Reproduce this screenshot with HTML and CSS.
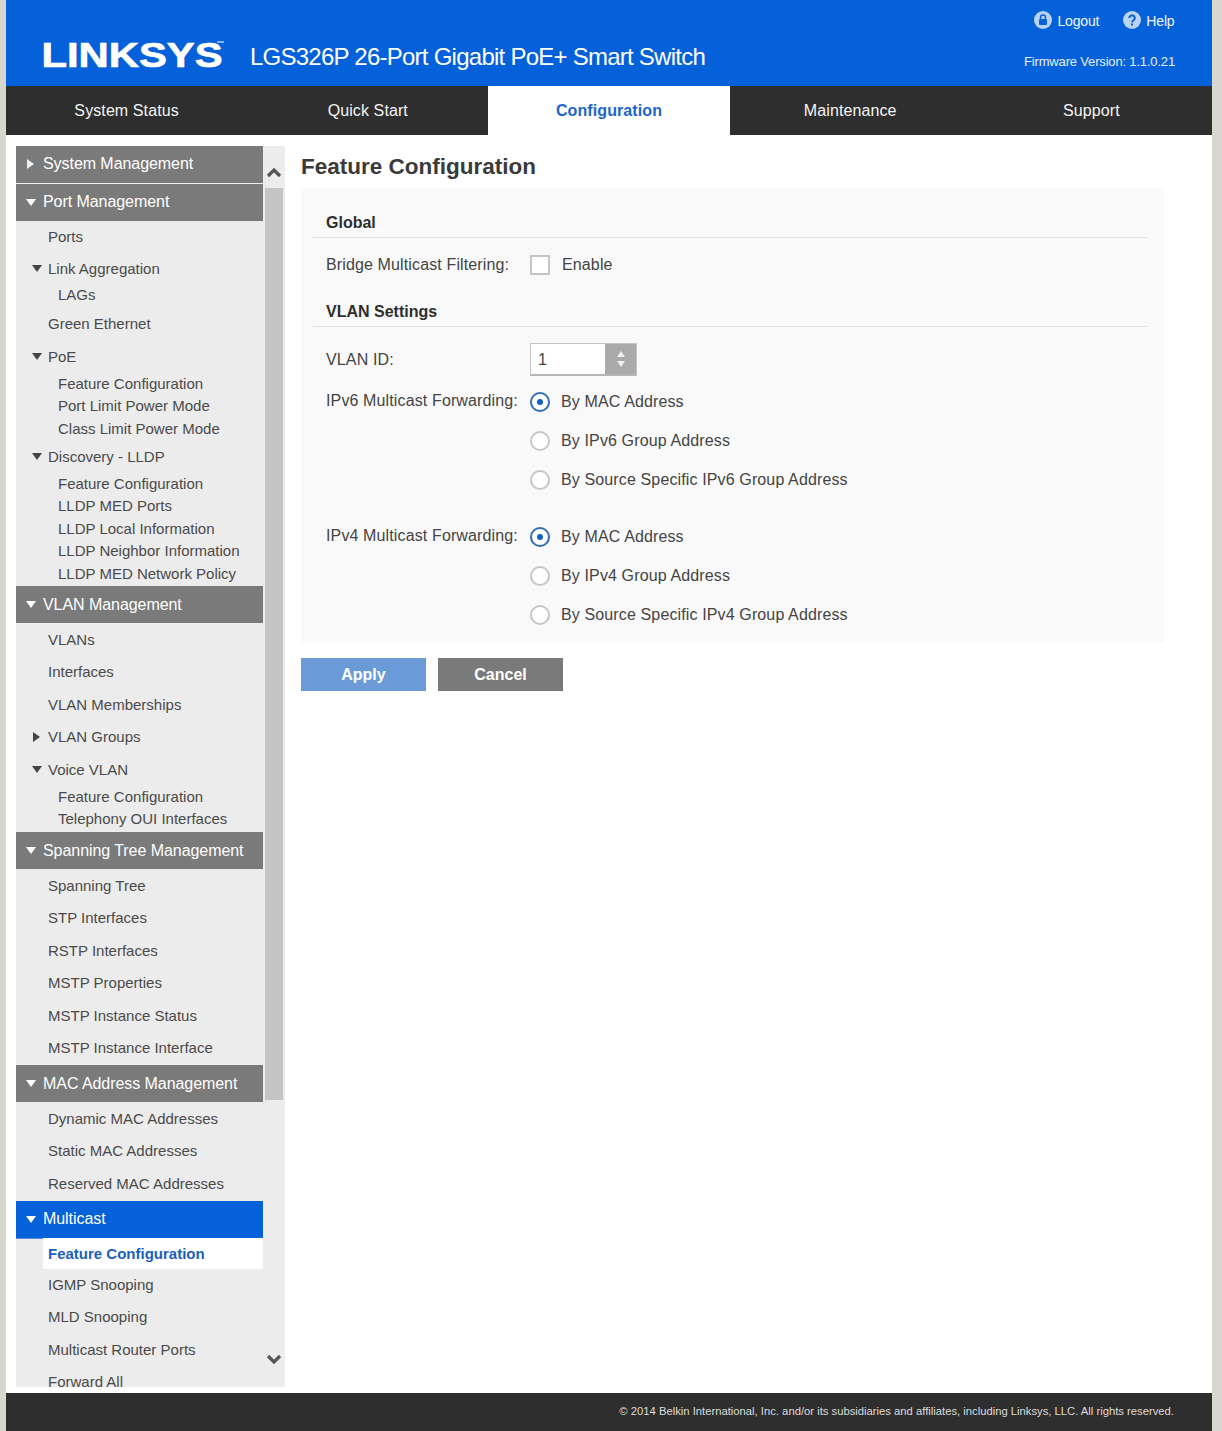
FILE: index.html
```html
<!DOCTYPE html>
<html lang="en">
<head>
<meta charset="utf-8">
<title>LGS326P Feature Configuration</title>
<link rel="stylesheet" href="styles.css">
</head>
<body>
<div class="page">
  <header class="top">
    <div class="brand">
      <svg class="logo" width="190" height="32" viewBox="0 0 190 32"><text x="0.500" y="27.500" textLength="181" lengthAdjust="spacingAndGlyphs" class="logo-text">LINKSYS</text><rect x="176" y="2.500" width="7" height="1" fill="#fff"/></svg>
      <span class="product">LGS326P 26-Port Gigabit PoE+ Smart Switch</span>
    </div>
    <div class="top-right">
      <div class="links">
        <a class="link"><svg width="18" height="18" viewBox="0 0 18 18"><circle cx="9" cy="9" r="9" fill="#b9d3f2"/><rect x="5" y="8" width="8" height="6" rx="1" fill="#0561d9"/><path d="M6.500 8V6.500a2.500 2.500 0 0 1 5 0V8" fill="none" stroke="#0561d9" stroke-width="1.500"/></svg><span class="link-t">Logout</span></a>
        <a class="link"><svg width="18" height="18" viewBox="0 0 18 18"><circle cx="9" cy="9" r="9" fill="#b9d3f2"/><path d="M6.200 7a2.800 2.600 0 1 1 4.300 2.200C9.500 9.900 9 10.300 9 11.300" fill="none" stroke="#0561d9" stroke-width="2"/><rect x="8" y="12.500" width="2" height="2" fill="#0561d9"/></svg><span class="link-t">Help</span></a>
      </div>
      <div class="firmware">Firmware Version: 1.1.0.21</div>
    </div>
  </header>
  <nav class="tabs">
    <a class="tab">System Status</a>
    <a class="tab">Quick Start</a>
    <a class="tab tab-on">Configuration</a>
    <a class="tab">Maintenance</a>
    <a class="tab">Support</a>
  </nav>
  <div class="body">
    <aside class="side">
      <div class="menu">
        <div class="hd hd-up closed">System Management</div>
        <div class="hd hd-up open gap1">Port Management</div>
        <div class="item tight">Ports</div>
        <div class="item open-dk">Link Aggregation</div>
        <div class="sub lags">LAGs</div>
        <div class="item">Green Ethernet</div>
        <div class="item open-dk">PoE</div>
        <div class="sub">Feature Configuration</div>
        <div class="sub">Port Limit Power Mode</div>
        <div class="sub">Class Limit Power Mode</div>
        <div class="item open-dk">Discovery - LLDP</div>
        <div class="sub">Feature Configuration</div>
        <div class="sub">LLDP MED Ports</div>
        <div class="sub">LLDP Local Information</div>
        <div class="sub">LLDP Neighbor Information</div>
        <div class="sub">LLDP MED Network Policy</div>
        <div class="hd open gap1">VLAN Management</div>
        <div class="item">VLANs</div>
        <div class="item">Interfaces</div>
        <div class="item">VLAN Memberships</div>
        <div class="item closed-dk">VLAN Groups</div>
        <div class="item open-dk">Voice VLAN</div>
        <div class="sub">Feature Configuration</div>
        <div class="sub">Telephony OUI Interfaces</div>
        <div class="hd open gap15">Spanning Tree Management</div>
        <div class="item">Spanning Tree</div>
        <div class="item">STP Interfaces</div>
        <div class="item">RSTP Interfaces</div>
        <div class="item">MSTP Properties</div>
        <div class="item">MSTP Instance Status</div>
        <div class="item">MSTP Instance Interface</div>
        <div class="hd open gap1">MAC Address Management</div>
        <div class="item">Dynamic MAC Addresses</div>
        <div class="item">Static MAC Addresses</div>
        <div class="item">Reserved MAC Addresses</div>
        <div class="hd hd-up open hd-on gap15">Multicast</div>
        <div class="active">Feature Configuration</div>
        <div class="item tight">IGMP Snooping</div>
        <div class="item">MLD Snooping</div>
        <div class="item">Multicast Router Ports</div>
        <div class="item">Forward All</div>
      </div>
      <div class="scroll">
        <svg class="chev" width="16" height="12" viewBox="0 0 16 12"><path d="M2 10l6-6 6 6" fill="none" stroke="#555" stroke-width="3.200"/></svg>
        <div class="thumb"></div>
        <svg class="chev chev-down" width="16" height="12" viewBox="0 0 16 12"><path d="M2 2l6 6 6-6" fill="none" stroke="#555" stroke-width="3.200"/></svg>
      </div>
    </aside>
    <main class="main">
      <h1 class="title">Feature Configuration</h1>
      <section class="panel">
        <h2 class="sec">Global</h2>
        <div class="row bridge">
          <span class="lab">Bridge Multicast Filtering:</span>
          <span class="check"></span>
          <span class="val">Enable</span>
        </div>
        <h2 class="sec sec2">VLAN Settings</h2>
        <div class="row vlan">
          <span class="lab">VLAN ID:</span>
          <div class="spin"><span class="spin-val">1</span><span class="spin-btn"><svg width="10" height="16" viewBox="0 0 10 16"><path d="M5 0l4 6H1z M5 16l-4-6h8z" fill="#f0f0f0"/></svg></span></div>
        </div>
        <div class="fwd">
          <span class="lab lab-fwd">IPv6 Multicast Forwarding:</span>
          <div class="opts">
            <div class="opt"><span class="radio on"></span>By MAC Address</div>
            <div class="opt"><span class="radio"></span>By IPv6 Group Address</div>
            <div class="opt"><span class="radio"></span>By Source Specific IPv6 Group Address</div>
          </div>
        </div>
        <div class="fwd fwd2">
          <span class="lab lab-fwd">IPv4 Multicast Forwarding:</span>
          <div class="opts">
            <div class="opt"><span class="radio on"></span>By MAC Address</div>
            <div class="opt"><span class="radio"></span>By IPv4 Group Address</div>
            <div class="opt"><span class="radio"></span>By Source Specific IPv4 Group Address</div>
          </div>
        </div>
      </section>
      <div class="btns">
        <button class="btn apply">Apply</button>
        <button class="btn cancel">Cancel</button>
      </div>
    </main>
  </div>
  <footer class="foot">© 2014 Belkin International, Inc. and/or its subsidiaries and affiliates, including Linksys, LLC. All rights reserved.</footer>
</div>
</body>
</html>
```
FILE: styles.css
```css
* { box-sizing: border-box; }
html, body { margin: 0; padding: 0; }
body {
  background: #d9d6cf;
  font-family: "Liberation Sans", Arial, sans-serif;
  color: #444;
  font-size: 16px;
  overflow: hidden;
}
.page {
  width: 1206px;
  height: 1431px;
  margin-left: 6px;
  background: #fff;
  display: flex;
  flex-direction: column;
  overflow: hidden;
}
.top {
  height: 86px;
  flex: none;
  background: #0561d9;
  color: #fff;
  display: flex;
  justify-content: space-between;
}
.brand {
  display: flex;
  align-items: flex-start;
  padding: 39px 0 0 34.500px;
}
.logo { display: block; flex: none; overflow: visible; }
.logo-text {
  font-family: "Liberation Sans", Arial, sans-serif;
  font-weight: 700;
  font-size: 35px;
  fill: #fff;
  stroke: #fff;
  stroke-width: 0.7px;
}
.product {
  margin: 3px 0 0 19.500px;
  font-size: 24px;
  line-height: 30px;
  letter-spacing: -0.75px;
}
.top-right {
  width: 200px;
  padding: 11px 37px 0 0;
  display: flex;
  flex-direction: column;
  align-items: flex-end;
}
.links { display: flex; gap: 24px; height: 18px; margin-right: 0.5px; }
.link {
  display: flex;
  align-items: center;
  gap: 5px;
  font-size: 14px;
  letter-spacing: -0.15px;
  color: #f0f5fc;
}
.link-t { margin-top: 2px; }
.firmware {
  margin-top: 24px;
  font-size: 13px;
  line-height: 18px;
  white-space: nowrap;
  letter-spacing: -0.17px;
  color: #e6effa;
}
.tabs {
  height: 49px;
  flex: none;
  background: #2e2e2e;
  display: grid;
  grid-template-columns: repeat(5, 1fr);
}
.tab {
  display: flex;
  align-items: center;
  justify-content: center;
  color: #f4f4f4;
  font-size: 16px;
  letter-spacing: 0.1px;
}
.tab-on {
  background: #fff;
  color: #1b66c9;
  font-weight: 700;
}
.body {
  flex: 1;
  min-height: 0;
  display: flex;
  align-items: flex-start;
  padding: 11px 0 0 10px;
}
.side {
  width: 269px;
  height: 1241px;
  flex: none;
  display: flex;
}
.menu {
  width: 247px;
  flex: none;
  height: 100%;
  overflow: hidden;
  background: #ececec;
  font-size: 15px;
  color: #4a4a4a;
}
.hd {
  height: 37px;
  display: flex;
  align-items: center;
  padding-left: 10px;
  background: #7a7a7a;
  color: #fff;
  font-size: 16px;
  letter-spacing: -0.06px;
}
.hd-up { padding-bottom: 1px; }
.hd::before {
  content: "";
  flex: none;
  width: 0;
  height: 0;
  margin-right: 7px;
}
.closed::before {
  margin-left: 1px;
  margin-right: 9px;
  border-left: 7px solid #eee;
  border-top: 5px solid transparent;
  border-bottom: 5px solid transparent;
}
.open::before {
  border-top: 7px solid #fff;
  border-left: 5px solid transparent;
  border-right: 5px solid transparent;
}
.gap1 { margin-top: 1px; }
.gap15 { margin-top: 1.5px; }
.hd-on { background: #0561d9; box-shadow: 0 1px 0 #5b8fd3; }
.item {
  height: 32.5px;
  display: flex;
  align-items: center;
  padding-left: 16px;
}
.item::before {
  content: "";
  flex: none;
  width: 16px;
}
.open-dk::before {
  width: 0;
  height: 0;
  margin-right: 6px;
  border-top: 7px solid #444;
  border-left: 5px solid transparent;
  border-right: 5px solid transparent;
}
.closed-dk::before {
  width: 0;
  height: 0;
  margin: 0 8px 0 1px;
  border-left: 7px solid #444;
  border-top: 5px solid transparent;
  border-bottom: 5px solid transparent;
}
.tight { margin-top: -1px; }
.sub {
  height: 22.5px;
  display: flex;
  align-items: center;
  padding: 0 0 1.5px 42px;
}
.lags { margin-top: -1px; margin-bottom: 1px; }
.active {
  height: 31px;
  margin-left: 27px;
  padding-left: 5px;
  display: flex;
  align-items: center;
  background: #fff;
  color: #1b5fbd;
  font-weight: 700;
  font-size: 15px;
}
.scroll {
  width: 22px;
  flex: none;
  height: 100%;
  background: #ececec;
  display: flex;
  flex-direction: column;
  align-items: center;
}
.chev { flex: none; margin: 20px 0 10px; }
.chev-down { margin: 254px 0 0; }
.thumb {
  width: 18px;
  height: 912px;
  flex: none;
  background: #c4c4c4;
}
.main {
  flex: 1;
  min-width: 0;
  padding-left: 16px;
}
.title {
  margin: 0;
  height: 42px;
  font-size: 22.5px;
  line-height: 42px;
  color: #3a3a3a;
  font-weight: 700;
}
.panel {
  width: 863px;
  height: 454px;
  background: #f9f9f9;
  padding: 20px 17px 0 12px;
  letter-spacing: 0.13px;
}
.sec {
  margin: 0;
  height: 30px;
  padding: 0 0 0 13px;
  border-bottom: 1px solid #e2e2e2;
  font-size: 16px;
  line-height: 29px;
  color: #2e2e2e;
  font-weight: 700;
  letter-spacing: 0;
}
.sec2 { margin-top: 5px; }
.row { display: flex; align-items: center; padding-left: 13px; }
.bridge { height: 54px; }
.vlan { height: 33px; margin-top: 16px; }
.lab { width: 204px; flex: none; }
.check {
  width: 20px;
  height: 20px;
  border: 2px solid #c4c4c4;
  background: #fff;
}
.val { margin-left: 12px; }
.spin {
  width: 107px;
  height: 33px;
  display: flex;
  border: 1px solid #c4c4c4;
  border-bottom: 2px solid #b5b5b5;
  background: #fff;
}
.spin-val { flex: 1; padding-left: 7px; line-height: 32px; }
.spin-btn {
  width: 31px;
  background: #aaa;
  display: flex;
  align-items: center;
  justify-content: center;
}
.fwd {
  display: flex;
  margin-top: 6px;
  padding-left: 13px;
}
.fwd2 { margin-top: 18px; }
.lab-fwd { line-height: 38px; }
.opt {
  height: 39px;
  display: flex;
  align-items: center;
}
.radio {
  width: 20px;
  height: 20px;
  margin-right: 11px;
  flex: none;
  border-radius: 50%;
  border: 2px solid #c6c6c6;
  background: #fff;
}
.radio.on {
  border-color: #2f6db5;
  display: flex;
  align-items: center;
  justify-content: center;
}
.radio.on::after {
  content: "";
  width: 6px;
  height: 6px;
  border-radius: 50%;
  background: #0f5fc4;
}
.btns {
  display: flex;
  gap: 12px;
  margin-top: 16px;
}
.btn {
  width: 125px;
  height: 33px;
  border: 0;
  padding: 0;
  color: #fff;
  font-family: inherit;
  font-size: 16px;
  font-weight: 700;
}
.apply { background: #6a9bd8; }
.cancel { background: #7a7a7a; }
.foot {
  height: 38px;
  flex: none;
  margin-top: auto;
  background: #2e2e2e;
  color: #ddd;
  font-size: 11.25px;
  line-height: 36px;
  text-align: right;
  padding-right: 38px;
}
```
